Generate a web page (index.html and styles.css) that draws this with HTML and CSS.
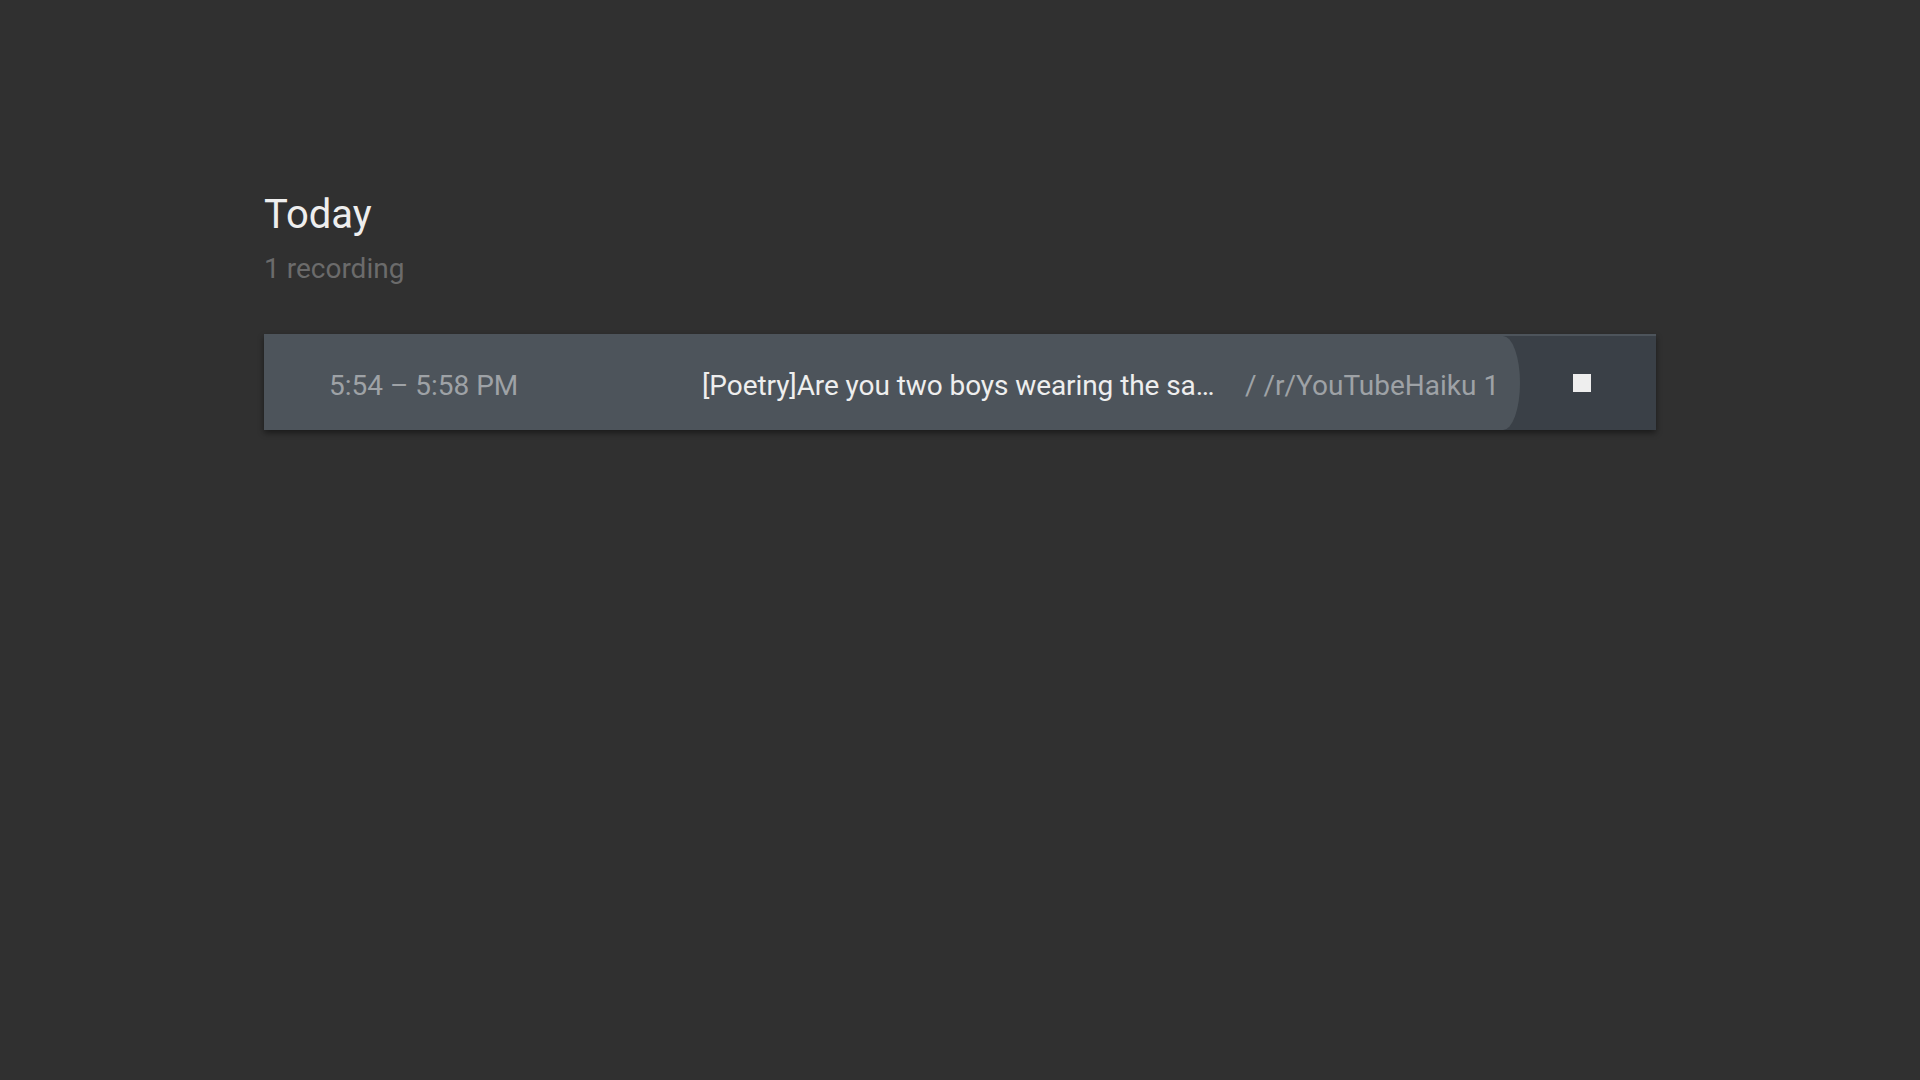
FILE: index.html
```html
<!DOCTYPE html>
<html lang="en">
<head>
<meta charset="utf-8">
<title>Recordings</title>
<link rel="stylesheet" href="styles.css">
</head>
<body>
<main class="page">
  <section class="day">
    <h1 class="day-title">Today</h1>
    <p class="day-count">1 recording</p>
    <div class="rec-row">
      <div class="rec-main">
        <span class="rec-time">5:54 – 5:58 PM</span>
        <span class="rec-title">[Poetry]Are you two boys wearing the sa…</span>
        <span class="rec-channel">/ /r/YouTubeHaiku 1</span>
      </div>
      <div class="rec-action">
        <span class="stop-icon"></span>
      </div>
    </div>
  </section>
</main>
</body>
</html>
```
FILE: styles.css
```css
html, body {
  margin: 0;
  padding: 0;
  background: #303030;
  height: 100%;
}
body {
  font-family: Roboto, "Noto Sans", sans-serif;
}
.page {
  padding: 191px 264px 0 264px;
}
.day-title {
  margin: 0;
  font-size: 40px;
  line-height: 48px;
  font-weight: 400;
  color: #eeeeee;
}
.day-count {
  margin: 14px 0 0 0;
  font-size: 28px;
  line-height: 32px;
  color: #6b6b6b;
}
.rec-row {
  margin-top: 49px;
  width: 1392px;
  height: 96px;
  box-sizing: border-box;
  border-top: 2px solid #4d545b;
  background: #3a4047;
  display: flex;
  box-shadow: 0 3px 6px rgba(0, 0, 0, 0.45);
}
.rec-main {
  width: 1256px;
  flex: none;
  background: #4d545b;
  border-radius: 0 17px 17px 0 / 0 47px 47px 0;
  display: flex;
  align-items: center;
  padding: 6px 0 0 65px;
  box-sizing: border-box;
  font-size: 28px;
  line-height: 34px;
  white-space: nowrap;
}
.rec-time {
  width: 373px;
  flex: none;
  color: #9ea2a6;
}
.rec-title {
  width: 543px;
  flex: none;
  color: #eeeeee;
  letter-spacing: -0.08px;
}
.rec-channel {
  color: #9ea2a6;
}
.rec-action {
  flex: 1;
  display: flex;
  align-items: center;
  padding-left: 53px;
}
.stop-icon {
  width: 18px;
  height: 18px;
  background: #eeeeee;
}
```
